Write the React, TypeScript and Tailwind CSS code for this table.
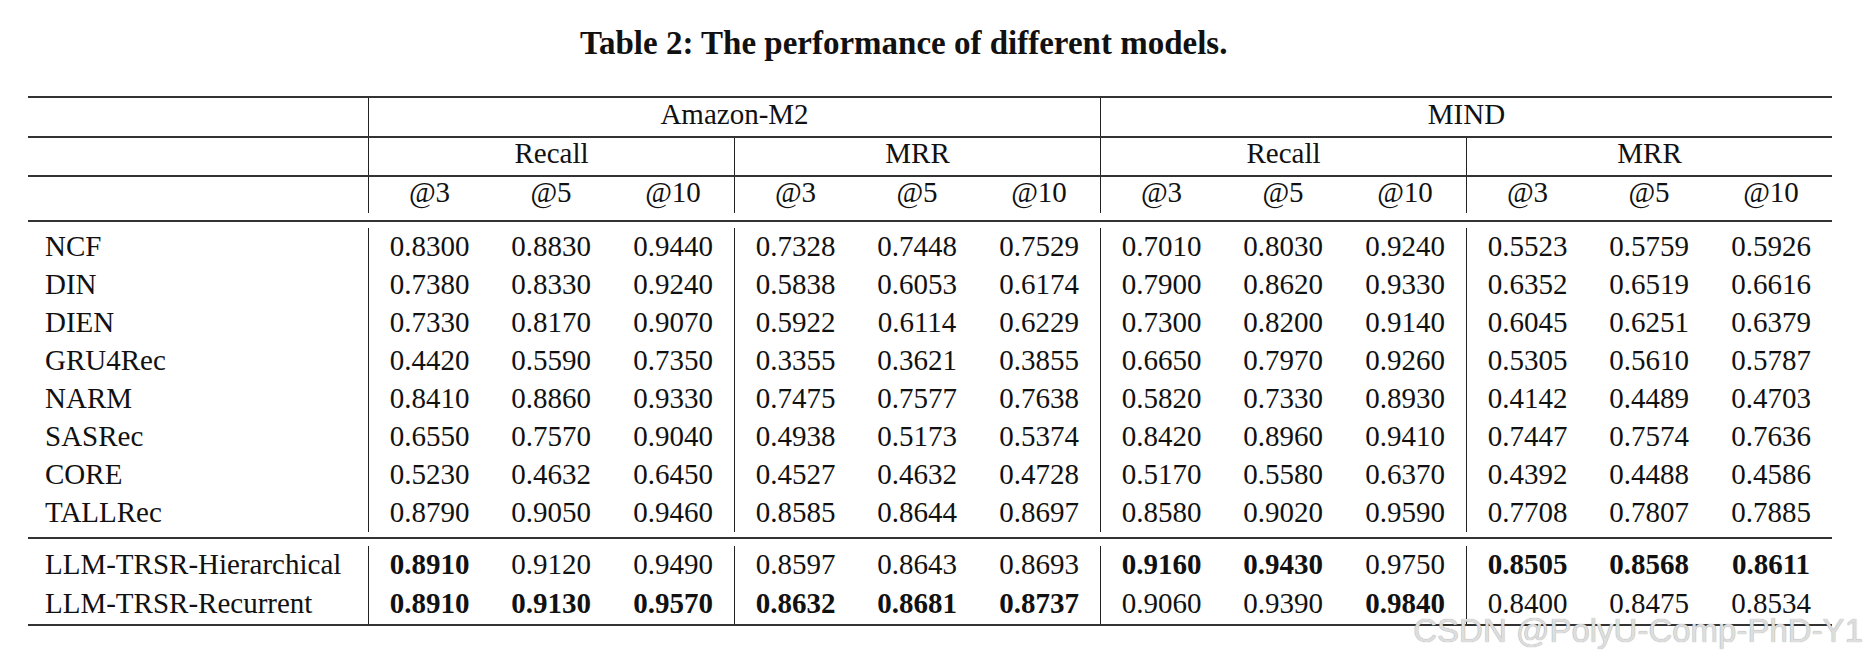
import React from "react";

type Cell = { v: string; b?: boolean };

const group1: [string, string[]][] = [
  ["NCF", ["0.8300", "0.8830", "0.9440", "0.7328", "0.7448", "0.7529", "0.7010", "0.8030", "0.9240", "0.5523", "0.5759", "0.5926"]],
  ["DIN", ["0.7380", "0.8330", "0.9240", "0.5838", "0.6053", "0.6174", "0.7900", "0.8620", "0.9330", "0.6352", "0.6519", "0.6616"]],
  ["DIEN", ["0.7330", "0.8170", "0.9070", "0.5922", "0.6114", "0.6229", "0.7300", "0.8200", "0.9140", "0.6045", "0.6251", "0.6379"]],
  ["GRU4Rec", ["0.4420", "0.5590", "0.7350", "0.3355", "0.3621", "0.3855", "0.6650", "0.7970", "0.9260", "0.5305", "0.5610", "0.5787"]],
  ["NARM", ["0.8410", "0.8860", "0.9330", "0.7475", "0.7577", "0.7638", "0.5820", "0.7330", "0.8930", "0.4142", "0.4489", "0.4703"]],
  ["SASRec", ["0.6550", "0.7570", "0.9040", "0.4938", "0.5173", "0.5374", "0.8420", "0.8960", "0.9410", "0.7447", "0.7574", "0.7636"]],
  ["CORE", ["0.5230", "0.4632", "0.6450", "0.4527", "0.4632", "0.4728", "0.5170", "0.5580", "0.6370", "0.4392", "0.4488", "0.4586"]],
  ["TALLRec", ["0.8790", "0.9050", "0.9460", "0.8585", "0.8644", "0.8697", "0.8580", "0.9020", "0.9590", "0.7708", "0.7807", "0.7885"]],
];

const group2: [string, Cell[]][] = [
  [
    "LLM-TRSR-Hierarchical",
    [
      { v: "0.8910", b: true },
      { v: "0.9120" },
      { v: "0.9490" },
      { v: "0.8597" },
      { v: "0.8643" },
      { v: "0.8693" },
      { v: "0.9160", b: true },
      { v: "0.9430", b: true },
      { v: "0.9750" },
      { v: "0.8505", b: true },
      { v: "0.8568", b: true },
      { v: "0.8611", b: true },
    ],
  ],
  [
    "LLM-TRSR-Recurrent",
    [
      { v: "0.8910", b: true },
      { v: "0.9130", b: true },
      { v: "0.9570", b: true },
      { v: "0.8632", b: true },
      { v: "0.8681", b: true },
      { v: "0.8737", b: true },
      { v: "0.9060" },
      { v: "0.9390" },
      { v: "0.9840", b: true },
      { v: "0.8400" },
      { v: "0.8475" },
      { v: "0.8534" },
    ],
  ],
];

const gridCls = "grid grid-cols-[340px_repeat(12,122px)]";
const ks = ["@3", "@5", "@10"];

function Rule() {
  return <div className="h-[2px] w-full bg-[#333]" />;
}

function ValueCell({ c, i, h }: { c: Cell; i: number; h: string }) {
  const divider = i % 3 === 0;
  return (
    <div
      className={`${h} flex items-center justify-center pb-[2px] ${divider ? "border-l border-[#222]" : ""} ${
        c.b ? "font-bold" : ""
      }`}
    >
      {c.v}
    </div>
  );
}

export default function App() {
  return (
    <div className="relative h-[664px] w-[1872px] overflow-hidden bg-white font-['Liberation_Serif',serif] text-[#111]">
      <div className="h-[96px] pl-[580px] pt-[27px] text-[33px] font-bold leading-[33px]">
        Table 2: The performance of different models.
      </div>

      <div className="ml-[28px] w-[1804px] text-[29px] leading-none">
        <Rule />
        {/* header row 1 */}
        <div className={gridCls}>
          <div className="h-[38px]" />
          <div className="col-span-6 flex h-[38px] items-center justify-center border-l border-[#222] pb-[6px]">Amazon-M2</div>
          <div className="col-span-6 flex h-[38px] items-center justify-center border-l border-[#222] pb-[6px]">MIND</div>
        </div>
        <Rule />
        {/* header row 2 */}
        <div className={gridCls}>
          <div className="h-[37px]" />
          {["Recall", "MRR", "Recall", "MRR"].map((t, i) => (
            <div key={i} className="col-span-3 flex h-[37px] items-center justify-center border-l border-[#222] pb-[6px]">
              {t}
            </div>
          ))}
        </div>
        <Rule />
        {/* header row 3 */}
        <div className={gridCls}>
          <div className="h-[36px]" />
          {Array.from({ length: 12 }).map((_, i) => (
            <div
              key={i}
              className={`flex h-[36px] items-center justify-center pb-[5px] ${i % 3 === 0 ? "border-l border-[#222]" : ""}`}
            >
              {ks[i % 3]}
            </div>
          ))}
        </div>
        <div className="h-[7px]" />
        <Rule />

        <div className="h-[6px]" />
        {group1.map(([name, vals]) => (
          <div key={name} className={gridCls}>
            <div className="flex h-[38px] items-center pb-[2px] pl-[17px]">{name}</div>
            {vals.map((v, i) => (
              <ValueCell key={i} c={{ v }} i={i} h="h-[38px]" />
            ))}
          </div>
        ))}
        <div className="h-[5px]" />
        <Rule />
        <div className="h-[7px]" />
        {group2.map(([name, vals]) => (
          <div key={name} className={gridCls}>
            <div className="flex h-[39px] items-center pb-[2px] pl-[17px]">{name}</div>
            {vals.map((c, i) => (
              <ValueCell key={i} c={c} i={i} h="h-[39px]" />
            ))}
          </div>
        ))}
        <Rule />
      </div>

      <div className="absolute right-[9px] top-[619px] font-['Liberation_Sans',sans-serif] text-[33px] leading-[24px] text-[#dedede] [text-shadow:0_0_1px_#8c8c8c]">
        CSDN @PolyU-Comp-PhD-Y1
      </div>
    </div>
  );
}
